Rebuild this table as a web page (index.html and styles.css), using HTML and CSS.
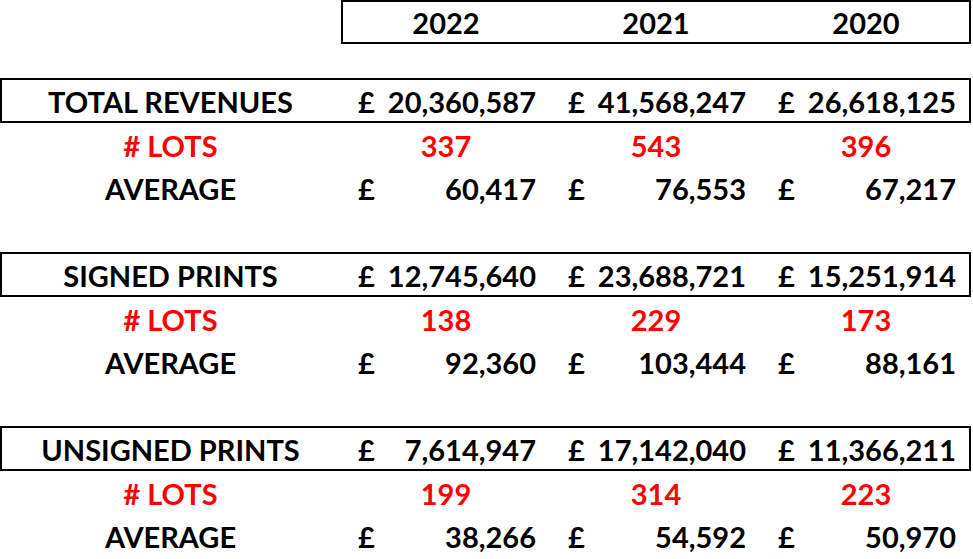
FILE: index.html
```html
<!DOCTYPE html>
<html lang="en">
<head>
<meta charset="utf-8">
<title>Revenues</title>
<link rel="stylesheet" href="styles.css">
</head>
<body>
<div class="sheet">
  <div class="years">
    <div class="cell center">2022</div>
    <div class="cell center">2021</div>
    <div class="cell center">2020</div>
  </div>

  <section class="block first">
    <div class="row boxed">
      <div class="cell center">TOTAL REVENUES</div>
      <div class="cell money"><span>£</span><span>20,360,587</span></div>
      <div class="cell money"><span>£</span><span>41,568,247</span></div>
      <div class="cell money"><span>£</span><span>26,618,125</span></div>
    </div>
    <div class="row red">
      <div class="cell center"># LOTS</div>
      <div class="cell center">337</div>
      <div class="cell center">543</div>
      <div class="cell center">396</div>
    </div>
    <div class="row">
      <div class="cell center">AVERAGE</div>
      <div class="cell money"><span>£</span><span>60,417</span></div>
      <div class="cell money"><span>£</span><span>76,553</span></div>
      <div class="cell money"><span>£</span><span>67,217</span></div>
    </div>
  </section>

  <section class="block">
    <div class="row boxed">
      <div class="cell center">SIGNED PRINTS</div>
      <div class="cell money"><span>£</span><span>12,745,640</span></div>
      <div class="cell money"><span>£</span><span>23,688,721</span></div>
      <div class="cell money"><span>£</span><span>15,251,914</span></div>
    </div>
    <div class="row red">
      <div class="cell center"># LOTS</div>
      <div class="cell center">138</div>
      <div class="cell center">229</div>
      <div class="cell center">173</div>
    </div>
    <div class="row">
      <div class="cell center">AVERAGE</div>
      <div class="cell money"><span>£</span><span>92,360</span></div>
      <div class="cell money"><span>£</span><span>103,444</span></div>
      <div class="cell money"><span>£</span><span>88,161</span></div>
    </div>
  </section>

  <section class="block">
    <div class="row boxed">
      <div class="cell center">UNSIGNED PRINTS</div>
      <div class="cell money"><span>£</span><span>7,614,947</span></div>
      <div class="cell money"><span>£</span><span>17,142,040</span></div>
      <div class="cell money"><span>£</span><span>11,366,211</span></div>
    </div>
    <div class="row red">
      <div class="cell center"># LOTS</div>
      <div class="cell center">199</div>
      <div class="cell center">314</div>
      <div class="cell center">223</div>
    </div>
    <div class="row">
      <div class="cell center">AVERAGE</div>
      <div class="cell money"><span>£</span><span>38,266</span></div>
      <div class="cell money"><span>£</span><span>54,592</span></div>
      <div class="cell money"><span>£</span><span>50,970</span></div>
    </div>
  </section>
</div>
</body>
</html>
```

FILE: styles.css
```css
html, body {
  margin: 0;
  padding: 0;
  background: #ffffff;
}

body {
  font-family: Lato, "Open Sans", "Liberation Sans", sans-serif;
  font-weight: 700;
  font-size: 29px;
  color: #000000;
}

.sheet {
  width: 971px;
}

.years {
  margin-left: 341px;
  height: 44px;
  display: grid;
  grid-template-columns: 210px 210px 210px;
  outline: 2px solid #000;
  outline-offset: -2px;
}

.years .cell {
  height: 44px;
  line-height: 44px;
  padding-top: 1px;
  box-sizing: border-box;
}

.block {
  display: flex;
  flex-direction: column;
  margin-bottom: 43px;
}

.block:last-child {
  margin-bottom: 0;
}

.block.first {
  margin-top: 34px;
}

.row {
  display: grid;
  grid-template-columns: 341px 210px 210px 210px;
  height: 43px;
}

.row.boxed {
  height: 45px;
  outline: 2px solid #000;
  outline-offset: -2px;
}

.row.red {
  color: #ff0000;
}

.cell {
  box-sizing: border-box;
  padding-top: 2px;
  line-height: 41px;
  white-space: nowrap;
}

.row.boxed .cell {
  line-height: 43px;
}

.center {
  text-align: center;
}

.money {
  display: flex;
  justify-content: space-between;
  padding-left: 17px;
  padding-right: 15px;
}
```
